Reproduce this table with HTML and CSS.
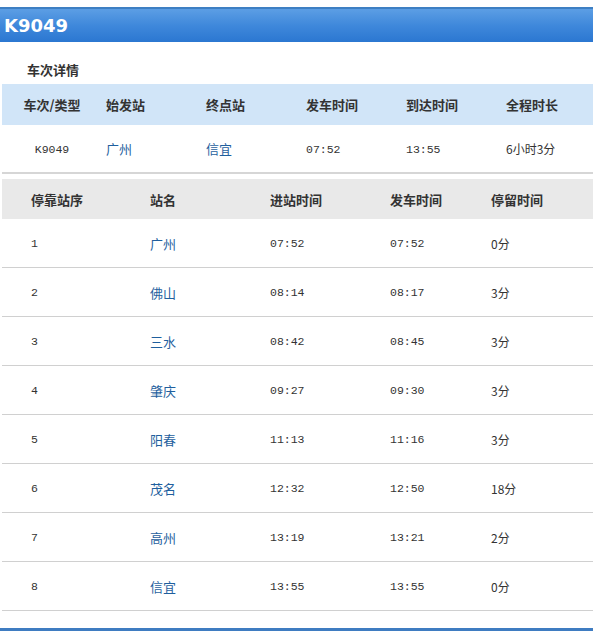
FILE: index.html
```html
<!DOCTYPE html>
<html lang="zh-CN">
<head>
<meta charset="utf-8">
<title>K9049</title>
<link rel="stylesheet" href="styles.css">
</head>
<body>
<div class="page">
  <div class="titlebar"><h1 class="train-no">K9049</h1></div>

  <h2 class="section-title">车次详情</h2>

  <div class="summary">
    <div class="srow shead">
      <div class="c c1">车次/类型</div>
      <div class="c">始发站</div>
      <div class="c">终点站</div>
      <div class="c">发车时间</div>
      <div class="c">到达时间</div>
      <div class="c">全程时长</div>
    </div>
    <div class="srow sdata">
      <div class="c c1 mono">K9049</div>
      <div class="c"><a class="link">广州</a></div>
      <div class="c"><a class="link">信宜</a></div>
      <div class="c mono">07:52</div>
      <div class="c mono">13:55</div>
      <div class="c dur">6小时3分</div>
    </div>
  </div>

  <div class="stops">
    <div class="trow thead">
      <div class="c">停靠站序</div>
      <div class="c">站名</div>
      <div class="c">进站时间</div>
      <div class="c">发车时间</div>
      <div class="c">停留时间</div>
    </div>
    <div class="trow"><div class="c mono">1</div><div class="c"><a class="link">广州</a></div><div class="c mono">07:52</div><div class="c mono">07:52</div><div class="c dur">0分</div></div>
    <div class="trow"><div class="c mono">2</div><div class="c"><a class="link">佛山</a></div><div class="c mono">08:14</div><div class="c mono">08:17</div><div class="c dur">3分</div></div>
    <div class="trow"><div class="c mono">3</div><div class="c"><a class="link">三水</a></div><div class="c mono">08:42</div><div class="c mono">08:45</div><div class="c dur">3分</div></div>
    <div class="trow"><div class="c mono">4</div><div class="c"><a class="link">肇庆</a></div><div class="c mono">09:27</div><div class="c mono">09:30</div><div class="c dur">3分</div></div>
    <div class="trow"><div class="c mono">5</div><div class="c"><a class="link">阳春</a></div><div class="c mono">11:13</div><div class="c mono">11:16</div><div class="c dur">3分</div></div>
    <div class="trow"><div class="c mono">6</div><div class="c"><a class="link">茂名</a></div><div class="c mono">12:32</div><div class="c mono">12:50</div><div class="c dur">18分</div></div>
    <div class="trow"><div class="c mono">7</div><div class="c"><a class="link">高州</a></div><div class="c mono">13:19</div><div class="c mono">13:21</div><div class="c dur">2分</div></div>
    <div class="trow"><div class="c mono">8</div><div class="c"><a class="link">信宜</a></div><div class="c mono">13:55</div><div class="c mono">13:55</div><div class="c dur">0分</div></div>
  </div>

  <div class="bottom-rule"></div>
</div>
</body>
</html>
```

FILE: styles.css
```css
html, body {
  margin: 0;
  padding: 0;
  background: #ffffff;
}

body {
  font-family: "Noto Sans CJK SC", "DejaVu Sans", sans-serif;
  color: #333333;
  font-size: 12px;
}

.page {
  width: 593px;
  padding-top: 7px;
  overflow: hidden;
}

.titlebar {
  height: 33px;
  border-top: 2px solid #3d7fc3;
  background: linear-gradient(to bottom, #5c9ee4 0%, #3f88db 50%, #2b77d1 100%);
  display: flex;
  align-items: center;
}

.train-no {
  margin: 0 0 0 4px;
  font-family: "DejaVu Sans", "Liberation Sans", sans-serif;
  font-weight: bold;
  font-size: 18px;
  color: #ffffff;
  line-height: 1;
}

.section-title {
  margin: 0;
  padding: 13px 0 0 27px;
  height: 29px;
  display: flex;
  align-items: center;
  font-size: 13px;
  font-weight: bold;
  color: #333333;
}

.summary {
  margin-left: 2px;
}

.srow {
  display: grid;
  grid-template-columns: 100px 100px 100px 100px 100px 1fr;
  align-items: center;
}

.srow .c {
  padding-left: 4px;
  white-space: nowrap;
}

.srow .c1 {
  padding-left: 0;
  text-align: center;
}

.shead {
  height: 41px;
  background: #d1e5f8;
  font-size: 13px;
  font-weight: bold;
  color: #333333;
}

.sdata {
  height: 47px;
  border-bottom: 2px solid #d6d6d6;
}

.stops {
  margin-left: 2px;
  margin-top: 5px;
}

.trow {
  display: grid;
  grid-template-columns: 119px 120px 120px 101px 1fr;
  align-items: center;
  height: 48px;
  border-bottom: 1px solid #d0d0d0;
}

.trow .c {
  padding-left: 29px;
  white-space: nowrap;
}

.thead {
  height: 40px;
  border-bottom: 0;
  background: #e9e9e9;
  font-size: 13px;
  font-weight: bold;
  color: #333333;
}

.mono {
  font-family: "Liberation Mono", "DejaVu Sans Mono", monospace;
  font-size: 11.5px;
  line-height: 14px;
  padding-top: 2px;
  color: #333333;
}

.dur {
  font-size: 12px;
  color: #333333;
}

.link {
  color: #1f5f9e;
  font-size: 13px;
  text-decoration: none;
}

.bottom-rule {
  margin-top: 17px;
  height: 3px;
  background: #3f7cc1;
}
```
